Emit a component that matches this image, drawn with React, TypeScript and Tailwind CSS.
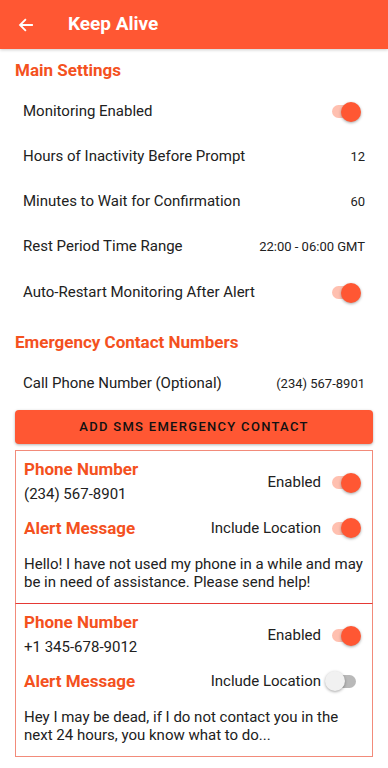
import React from "react";

function Toggle({ on }: { on: boolean }) {
  return (
    <div className="relative w-[36px] h-[20px] flex items-center">
      <div
        className={
          "w-[24px] h-[13px] rounded-full ml-[7px] " +
          (on ? "bg-[#ffc0b0]" : "bg-[#b9b9b9]")
        }
      />
      <div
        className={
          "absolute top-0 w-[20px] h-[20px] rounded-full shadow-[0_1px_3px_rgba(0,0,0,0.35)] " +
          (on ? "left-[16px] bg-[#ff5733]" : "left-0 bg-[#f1f1f1]")
        }
      />
    </div>
  );
}

function Row({ label, children }: { label: string; children: React.ReactNode }) {
  return (
    <div className="h-[45px] flex items-center justify-between pl-[23px] pr-[23px]">
      <span className="text-[15px] text-[#212121]">{label}</span>
      <div className="flex items-center">{children}</div>
    </div>
  );
}

function Value({ text }: { text: string }) {
  return <span className="text-[13px] text-[#212121]">{text}</span>;
}

function ContactCard({
  phone,
  enabled,
  location,
  message,
  className,
}: {
  phone: string;
  enabled: boolean;
  location: boolean;
  message: string;
  className: string;
}) {
  return (
    <div className={"mx-[15px] px-[8px] pt-[7px] pb-[12px] border border-[#f28b7a] " + className}>
      <div className="flex justify-between">
        <div className="flex flex-col">
          <span className="text-[17px] font-bold text-[#f4511e] leading-[22px]">Phone Number</span>
          <span className="text-[15px] text-[#212121] leading-[22px] mt-[3px]">{phone}</span>
        </div>
        <div className="flex items-center gap-[4px] pr-[3px] pt-[2px]">
          <span className="text-[15px] text-[#212121]">Enabled</span>
          <Toggle on={enabled} />
        </div>
      </div>
      <div className="flex justify-between items-center mt-[12px] h-[22px]">
        <span className="text-[17px] font-bold text-[#f4511e] leading-[22px]">Alert Message</span>
        <div className="flex items-center gap-[4px] pr-[3px]">
          <span className="text-[15px] text-[#212121]">Include Location</span>
          <Toggle on={location} />
        </div>
      </div>
      <p className="text-[15px] text-[#212121] leading-[17.5px] mt-[17px]">{message}</p>
    </div>
  );
}

export default function App() {
  return (
    <div className="w-[388px] h-[768px] bg-white overflow-hidden font-['Roboto',sans-serif]">
      <header className="h-[49px] bg-[#ff5733] flex items-center shadow-[0_1px_3px_rgba(0,0,0,0.2)]">
        <svg className="ml-[17px]" width="18" height="18" viewBox="0 0 24 24" fill="none">
          <path
            d="M20 12H5M11 5l-7 7 7 7"
            stroke="#fff"
            strokeWidth="2.4"
            strokeLinecap="square"
          />
        </svg>
        <h1 className="ml-[33px] text-[19px] font-bold text-white">Keep Alive</h1>
      </header>

      <h2 className="px-[15px] pt-[10px] text-[17px] font-bold text-[#f4511e] leading-[22px]">
        Main Settings
      </h2>
      <div className="mt-[8px]">
        <Row label="Monitoring Enabled">
          <div className="mr-[4px]">
            <Toggle on />
          </div>
        </Row>
        <Row label="Hours of Inactivity Before Prompt">
          <Value text="12" />
        </Row>
        <Row label="Minutes to Wait for Confirmation">
          <Value text="60" />
        </Row>
        <Row label="Rest Period Time Range">
          <Value text="22:00 - 06:00 GMT" />
        </Row>
        <div className="mt-[1px]">
          <Row label="Auto-Restart Monitoring After Alert">
            <div className="mr-[4px]">
              <Toggle on />
            </div>
          </Row>
        </div>
      </div>

      <h2 className="px-[15px] pt-[16px] text-[17px] font-bold text-[#f4511e] leading-[22px]">
        Emergency Contact Numbers
      </h2>
      <div className="mt-[8px]">
        <Row label="Call Phone Number (Optional)">
          <Value text="(234) 567-8901" />
        </Row>
      </div>

      <button className="mx-[15px] mt-[4px] w-[358px] h-[34px] rounded-[4px] bg-[#ff5733] shadow-[0_1px_3px_rgba(0,0,0,0.3)] text-[13px] font-medium tracking-[1.3px] text-[#111]">
        ADD SMS EMERGENCY CONTACT
      </button>

      <div className="mt-[6px]">
        <ContactCard
          className="border-b-[#e53935]"
          phone="(234) 567-8901"
          enabled
          location
          message="Hello! I have not used my phone in a while and may be in need of assistance. Please send help!"
        />
        <ContactCard
          className="border-t-0"
          phone="+1 345-678-9012"
          enabled
          location={false}
          message="Hey I may be dead, if I do not contact you in the next 24 hours, you know what to do..."
        />
      </div>
    </div>
  );
}
